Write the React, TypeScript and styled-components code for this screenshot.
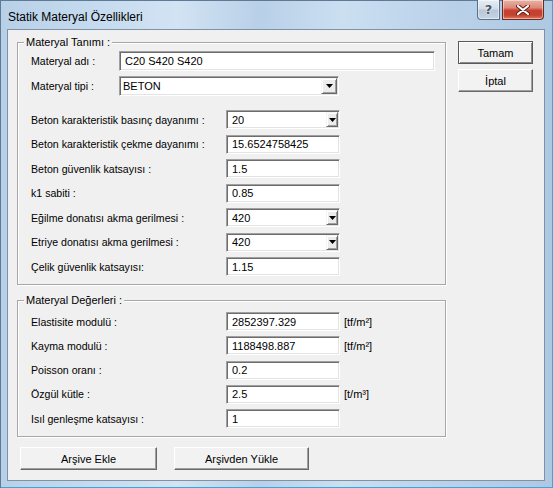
import React from "react";
import styled, { createGlobalStyle } from "styled-components";

const GlobalStyle = createGlobalStyle`
  html, body {
    margin: 0;
    padding: 0;
    background: #c4d8ec;
  }
  body {
    font-family: "Liberation Sans", Arial, sans-serif;
    color: #000;
  }
`;

const Window = styled.div`
  width: 553px;
  height: 488px;
  box-sizing: border-box;
  display: flex;
  flex-direction: column;
  padding: 0 8px 7px 7px;
  background: linear-gradient(
    90deg,
    #b8d0e7 0%,
    #c6dbef 18%,
    #d2e3f3 32%,
    #b8d0e8 47%,
    #cbdff1 62%,
    #bcd3ea 78%,
    #aec8e2 100%
  );
  box-shadow: inset 1px 1px 0 #5f7a95, inset -1px -1px 0 #3aa6dc;
`;

const TitleBar = styled.div`
  height: 29px;
  display: flex;
  align-items: flex-start;
  flex: none;
`;

const Title = styled.span`
  margin: 9px 0 0 1px;
  font-size: 12px;
  line-height: 16px;
  color: #000;
`;

const CaptionButtons = styled.div`
  margin-left: auto;
  margin-right: 1px;
  display: flex;
  gap: 2px;
`;

const CaptionButton = styled.div<{ $w: number; $close?: boolean }>`
  width: ${(p) => p.$w}px;
  height: 20px;
  box-sizing: border-box;
  display: flex;
  align-items: center;
  justify-content: center;
  border: 1px solid ${(p) => (p.$close ? "#6a2a22" : "#5d6f84")};
  border-top: none;
  border-radius: ${(p) => (p.$close ? "0 0 4px 0" : "0 0 0 4px")};
  background: ${(p) =>
    p.$close
      ? "linear-gradient(180deg, #eab3a6 0%, #dc8a78 40%, #c8402f 55%, #c4422f 80%, #e07a60 100%)"
      : "linear-gradient(180deg, #e6edf4 0%, #d2dde9 45%, #b6c7d8 55%, #c6d5e4 100%)"};
  box-shadow: inset 0 0 0 1px rgba(255, 255, 255, 0.45);
`;

const HelpGlyph = styled.span`
  font-family: "DejaVu Sans", sans-serif;
  font-weight: bold;
  font-size: 13px;
  color: #4a5564;
  text-shadow: 0 0 2px #fff, 0 0 1px #fff;
  line-height: 1;
`;

const Client = styled.div`
  flex: 1;
  display: flex;
  padding: 11px 0 0 9px;
  background: #f0f0f0;
  border: 1px solid #7d91a7;
`;

const MainColumn = styled.div`
  width: 429px;
  display: flex;
  flex-direction: column;
`;

const SideColumn = styled.div`
  width: 75px;
  margin-left: 12px;
  display: flex;
  flex-direction: column;
  gap: 5px;
`;

const Group = styled.div<{ $h: number; $mt: number }>`
  box-sizing: border-box;
  height: ${(p) => p.$h}px;
  margin-top: ${(p) => p.$mt}px;
  border: 1px solid #a7a7a7;
  box-shadow: 1px 1px 0 #fff, inset 1px 1px 0 #fff;
  display: flex;
  flex-direction: column;
`;

const Caption = styled.span`
  align-self: flex-start;
  margin: -8px 0 0 6px;
  padding: 0 2px;
  background: #f0f0f0;
  font-size: 11px;
  line-height: 14px;
`;

const Section = styled.div<{ $gap: number; $mt: number }>`
  display: flex;
  flex-direction: column;
  gap: ${(p) => p.$gap}px;
  margin-top: ${(p) => p.$mt}px;
`;

const Row = styled.div<{ $h: number }>`
  display: flex;
  align-items: center;
  height: ${(p) => p.$h}px;
  padding-left: 13px;
`;

const Label = styled.span<{ $w: number }>`
  width: ${(p) => p.$w}px;
  flex: none;
  font-size: 10.6px;
  white-space: nowrap;
`;

const Box = styled.div<{ $w: number; $pad?: number }>`
  box-sizing: border-box;
  width: ${(p) => p.$w}px;
  height: 100%;
  display: flex;
  align-items: center;
  padding-left: ${(p) => p.$pad ?? 5}px;
  background: #fff;
  border: 1px solid;
  border-color: #a0a0a0 #fff #fff #a0a0a0;
  box-shadow: inset 1px 1px 0 #6d6d6d, inset -1px -1px 0 #e3e3e3;
  font-size: 11px;
  white-space: nowrap;
`;

const DropButton = styled.div<{ $w: number }>`
  margin-left: auto;
  margin-right: 1px;
  width: ${(p) => p.$w}px;
  height: calc(100% - 2px);
  box-sizing: border-box;
  display: flex;
  align-items: center;
  justify-content: center;
  background: #ececec;
  border: 1px solid;
  border-color: #f4f4f4 #696969 #696969 #f4f4f4;
  box-shadow: inset 1px 1px 0 #fff, inset -1px -1px 0 #a0a0a0;
`;

const Unit = styled.span`
  margin-left: 4px;
  font-size: 11px;
`;

const Button = styled.div<{ $w: number; $default?: boolean }>`
  box-sizing: border-box;
  width: ${(p) => p.$w}px;
  height: 23px;
  display: flex;
  align-items: center;
  justify-content: center;
  font-size: 11px;
  color: #000;
  background: #f2f2f2;
  border: 1px solid;
  border-color: ${(p) =>
    p.$default ? "#5a5a5a" : "#fff #696969 #696969 #fff"};
  box-shadow: ${(p) =>
    p.$default
      ? "inset 1px 1px 0 #fff, inset -1px -1px 0 #8a8a8a"
      : "inset -1px -1px 0 #a0a0a0"};
`;

const BottomBar = styled.div`
  display: flex;
  gap: 17px;
  margin: 10px 0 0 3px;
`;

function Arrow() {
  return (
    <svg width="7" height="4" viewBox="0 0 7 4">
      <polygon points="0,0 7,0 3.5,4" fill="#000" />
    </svg>
  );
}

function CloseIcon() {
  return (
    <svg width="14" height="10" viewBox="0 0 14 10">
      <path d="M2 1 L12 9 M12 1 L2 9" stroke="#5a1c14" strokeWidth="4" strokeLinecap="round" />
      <path d="M2 1 L12 9 M12 1 L2 9" stroke="#fff" strokeWidth="2.2" strokeLinecap="round" />
    </svg>
  );
}

interface Field {
  label: string;
  value: string;
  combo?: boolean;
  unit?: string;
}

const tanim: Field[] = [
  { label: "Beton karakteristik basınç dayanımı :", value: "20", combo: true },
  { label: "Beton karakteristik çekme dayanımı :", value: "15.6524758425" },
  { label: "Beton güvenlik katsayısı :", value: "1.5" },
  { label: "k1 sabiti :", value: "0.85" },
  { label: "Eğilme donatısı akma gerilmesi :", value: "420", combo: true },
  { label: "Etriye donatısı akma gerilmesi :", value: "420", combo: true },
  { label: "Çelik güvenlik katsayısı:", value: "1.15" },
];

const degerler: Field[] = [
  { label: "Elastisite modulü :", value: "2852397.329", unit: "[tf/m²]" },
  { label: "Kayma modulü :", value: "1188498.887", unit: "[tf/m²]" },
  { label: "Poisson oranı :", value: "0.2" },
  { label: "Özgül kütle :", value: "2.5", unit: "[t/m³]" },
  { label: "Isıl genleşme katsayısı :", value: "1" },
];

function FieldRow({ label, value, combo, unit }: Field) {
  return (
    <Row $h={19}>
      <Label $w={195}>{label}</Label>
      <Box $w={114}>
        {value}
        {combo && (
          <DropButton $w={12}>
            <Arrow />
          </DropButton>
        )}
      </Box>
      {unit && <Unit>{unit}</Unit>}
    </Row>
  );
}

export default function App() {
  return (
    <>
      <GlobalStyle />
      <Window>
        <TitleBar>
          <Title>Statik Materyal Özellikleri</Title>
          <CaptionButtons>
            <CaptionButton $w={23}>
              <HelpGlyph>?</HelpGlyph>
            </CaptionButton>
            <CaptionButton $w={42} $close>
              <CloseIcon />
            </CaptionButton>
          </CaptionButtons>
        </TitleBar>
        <Client>
          <MainColumn>
            <Group $h={243} $mt={1}>
              <Caption>Materyal Tanımı :</Caption>
              <Section $gap={5} $mt={2}>
                <Row $h={20}>
                  <Label $w={88}>Materyal adı :</Label>
                  <Box $w={316} $pad={5}>C20 S420 S420</Box>
                </Row>
                <Row $h={20}>
                  <Label $w={88}>Materyal tipi :</Label>
                  <Box $w={220} $pad={3}>
                    BETON
                    <DropButton $w={16}>
                      <Arrow />
                    </DropButton>
                  </Box>
                </Row>
              </Section>
              <Section $gap={5.5} $mt={14}>
                {tanim.map((f, i) => (
                  <FieldRow key={i} {...f} />
                ))}
              </Section>
            </Group>
            <Group $h={137} $mt={15}>
              <Caption>Materyal Değerleri :</Caption>
              <Section $gap={5.25} $mt={5}>
                {degerler.map((f, i) => (
                  <FieldRow key={i} {...f} />
                ))}
              </Section>
            </Group>
            <BottomBar>
              <Button $w={137}>Arşive Ekle</Button>
              <Button $w={135}>Arşivden Yükle</Button>
            </BottomBar>
          </MainColumn>
          <SideColumn>
            <Button $w={75} $default>
              Tamam
            </Button>
            <Button $w={75}>İptal</Button>
          </SideColumn>
        </Client>
      </Window>
    </>
  );
}
